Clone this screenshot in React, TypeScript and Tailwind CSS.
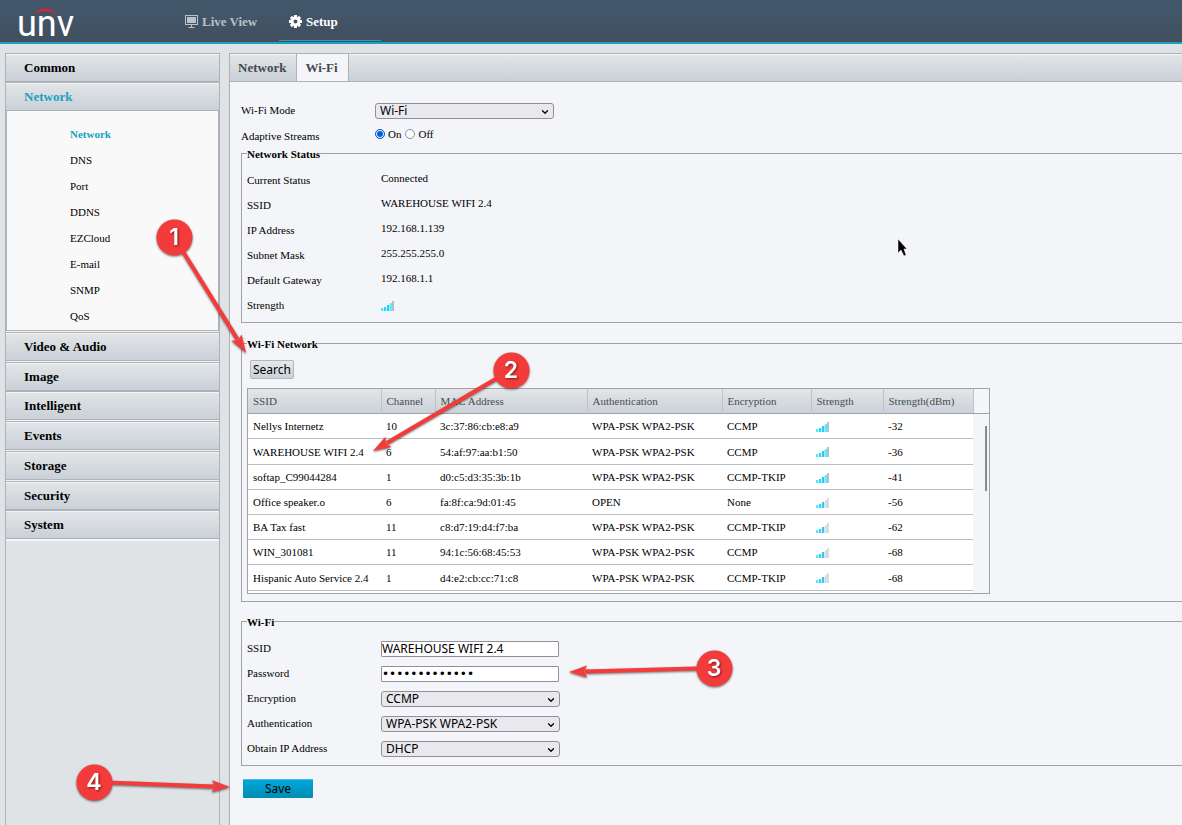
import { useState, type ReactNode } from "react";
import { ChevronDown } from "lucide-react";

const subMenu = ["Network", "DNS", "Port", "DDNS", "EZCloud", "E-mail", "SNMP", "QoS"];
const sections = ["Video & Audio", "Image", "Intelligent", "Events", "Storage", "Security", "System"];

const networks = [
  { ssid: "Nellys Internetz", channel: 10, mac: "3c:37:86:cb:e8:a9", auth: "WPA-PSK WPA2-PSK", enc: "CCMP", level: 4, dbm: -32 },
  { ssid: "WAREHOUSE WIFI 2.4", channel: 6, mac: "54:af:97:aa:b1:50", auth: "WPA-PSK WPA2-PSK", enc: "CCMP", level: 4, dbm: -36 },
  { ssid: "softap_C99044284", channel: 1, mac: "d0:c5:d3:35:3b:1b", auth: "WPA-PSK WPA2-PSK", enc: "CCMP-TKIP", level: 4, dbm: -41 },
  { ssid: "Office speaker.o", channel: 6, mac: "fa:8f:ca:9d:01:45", auth: "OPEN", enc: "None", level: 3, dbm: -56 },
  { ssid: "BA Tax fast", channel: 11, mac: "c8:d7:19:d4:f7:ba", auth: "WPA-PSK WPA2-PSK", enc: "CCMP-TKIP", level: 3, dbm: -62 },
  { ssid: "WIN_301081", channel: 11, mac: "94:1c:56:68:45:53", auth: "WPA-PSK WPA2-PSK", enc: "CCMP", level: 3, dbm: -68 },
  { ssid: "Hispanic Auto Service 2.4", channel: 1, mac: "d4:e2:cb:cc:71:c8", auth: "WPA-PSK WPA2-PSK", enc: "CCMP-TKIP", level: 3, dbm: -68 },
];

const columns = [
  { label: "SSID", width: "w-[133px]" },
  { label: "Channel", width: "w-[54px]" },
  { label: "MAC Address", width: "w-[152px]" },
  { label: "Authentication", width: "w-[135px]" },
  { label: "Encryption", width: "w-[89px]" },
  { label: "Strength", width: "w-[72px]" },
  { label: "Strength(dBm)", width: "w-[90px]" },
];

const steps = [
  { n: 1, x: 174, y: 237, tipX: 246, tipY: 353 },
  { n: 2, x: 511, y: 370, tipX: 373, tipY: 451 },
  { n: 3, x: 714, y: 668, tipX: 569, tipY: 672 },
  { n: 4, x: 94, y: 782, tipX: 230, tipY: 787 },
];

function Signal({ level }: { level: number }) {
  const bars = [
    { x: 0, h: 3, on: "#4fe9fa" },
    { x: 3, h: 4, on: "#33d3f7" },
    { x: 6, h: 6, on: "#35c4f5" },
    { x: 9, h: 8, on: "#4df2ff" },
    { x: 11, h: 10, on: "#4df2ff" },
  ];
  const off = level > 3 ? "#b9bcc0" : "#d9dcdf";
  return (
    <svg width="13" height="10" viewBox="0 0 13 10" shapeRendering="crispEdges" className="block">
      <path d="M2 7H5V6H8V4H9V10H2Z" fill="#c3f4fb" />
      {level > 3 && <path d="M8 3H11V10H8Z" fill="#9aeefb" />}
      {bars.map((b, i) => (
        <rect key={b.h} x={b.x} y={10 - b.h} width={2} height={b.h} fill={i < level ? b.on : off} />
      ))}
    </svg>
  );
}

function Select({ id, options }: { id: string; options: string[] }) {
  return (
    <div className="relative">
      <select
        id={id}
        className="block h-4 w-[179px] appearance-none rounded-[3px] border border-[#8f8f9d] bg-[#e9e9ed] pl-1 pr-4 font-['Noto_Sans',sans-serif] text-xs leading-[14px] text-black"
      >
        {options.map((o) => (
          <option key={o}>{o}</option>
        ))}
      </select>
      <ChevronDown className="pointer-events-none absolute top-1 right-1 size-2.5" strokeWidth={3} />
    </div>
  );
}

function Row({ label, htmlFor, children }: { label: string; htmlFor?: string; children: ReactNode }) {
  return (
    <div className="flex h-[25px] items-center">
      {htmlFor ? (
        <label htmlFor={htmlFor} className="w-[134px] shrink-0">{label}</label>
      ) : (
        <span className="w-[134px] shrink-0">{label}</span>
      )}
      {children}
    </div>
  );
}

function Group({ title, children }: { title: string; children: ReactNode }) {
  return (
    <fieldset className="min-w-0 border border-r-0 border-[#a0a2a6] pl-[5px]">
      <legend className="h-[13px] font-bold leading-[15px]">{title}</legend>
      {children}
    </fieldset>
  );
}

function MenuHeader({ label, active }: { label: string; active?: boolean }) {
  return (
    <button
      className={`block h-[29px] w-full border-y border-[#aeb2b7] bg-linear-to-b from-[#e3e6e8] to-[#c9d0d7] pl-[18px] text-left text-[13px] leading-[27px] font-bold shadow-[inset_0_1px_0_#f2f4f5] ${active ? "text-[#209fc5]" : "text-black"}`}
    >
      {label}
    </button>
  );
}

function Sidebar() {
  return (
    <aside className="w-[215px] shrink-0 border-x border-[#aeb2b7]">
      <MenuHeader label="Common" />
      <MenuHeader label="Network" active />
      <nav className="flex flex-col border-x border-b border-[#aeb2b7] bg-[#f9f9f9] pt-2.5 pb-px pl-[63px]">
        {subMenu.map((item, i) => (
          <a key={item} href="#" className={`leading-[26px] ${i === 0 ? "font-bold text-[#209fc5]" : ""}`}>
            {item}
          </a>
        ))}
      </nav>
      <div className="grid h-[210px] auto-rows-fr bg-[#f4f5f7] pt-px pb-px">
        {sections.map((s) => (
          <MenuHeader key={s} label={s} />
        ))}
      </div>
    </aside>
  );
}

function Header() {
  return (
    <header className="flex h-11 items-start border-b-2 border-[#209fc5] bg-linear-to-b from-[#43586d] to-[#414f5d]">
      <svg width="175" height="48" viewBox="0 0 175 48" role="img" aria-label="unv" className="shrink-0">
        <text x="17" y="36" fill="#fff" fontSize="36" fontFamily="Roboto, sans-serif">unv</text>
        <path d="M33 14Q45 3 57 14Q45 8 33 14Z" fill="#e0242b" />
      </svg>
      <nav className="flex gap-0.5 text-[13px] font-bold">
        <a href="#" className="flex h-[41px] w-[102px] items-center gap-1 pt-0.5 pl-2.5 text-[#b9c1c9]">
          <svg width="13" height="13" viewBox="0 0 13 13" fill="none" stroke="currentColor">
            <rect x="0.5" y="0.5" width="12" height="9" />
            <rect x="2" y="2" width="9" height="6" fill="currentColor" stroke="none" />
            <path d="M6.5 10v2M3.5 12.5h6" />
          </svg>
          Live View
        </a>
        <a href="#" className="flex h-[41px] w-[102px] items-center gap-1 border-b border-[#209fc5] pt-0.5 pl-2.5 text-white">
          <svg width="13" height="13" viewBox="0 0 13 13">
            {[0, 45, 90, 135].map((a) => (
              <rect key={a} x="5" y="0" width="3" height="13" fill="currentColor" transform={`rotate(${a} 6.5 6.5)`} />
            ))}
            <circle cx="6.5" cy="6.5" r="5" fill="currentColor" />
            <circle cx="6.5" cy="6.5" r="2" fill="#425365" />
          </svg>
          Setup
        </a>
      </nav>
    </header>
  );
}

function NetworkTable() {
  return (
    <div className="mt-[9px] flex h-[206px] w-[743px] border border-[#a0a2a6]">
      <div className="w-[725px] bg-white">
        <table className="w-full table-fixed border-collapse text-left">
          <thead>
            <tr className="h-[25px] bg-linear-to-b from-[#e3e6e8] to-[#c9d0d7] text-[#484c50] shadow-[inset_0_-1px_0_#a0a2a6]">
              {columns.map((c) => (
                <th key={c.label} className={`${c.width} border-r border-[#bfc3c7] p-0 pl-[5px] font-normal`}>{c.label}</th>
              ))}
            </tr>
          </thead>
          <tbody>
            {networks.map((n, i) => (
              <tr key={n.mac} className={`shadow-[inset_0_-1px_0_#bcbec1] ${i % 5 === 1 ? "h-[26px]" : "h-[25px]"}`}>
                <td className="p-0 pl-[5px] whitespace-nowrap">{n.ssid}</td>
                <td className="p-0 pl-[5px]">{n.channel}</td>
                <td className="p-0 pl-[5px]">{n.mac}</td>
                <td className="p-0 pl-[5px]">{n.auth}</td>
                <td className="p-0 pl-[5px]">{n.enc}</td>
                <td className="p-0 pl-[5px]"><Signal level={n.level} /></td>
                <td className="p-0 pl-[5px]">{n.dbm}</td>
              </tr>
            ))}
          </tbody>
        </table>
      </div>
      <div className="flex flex-1 flex-col">
        <div className="h-[25px] border-b border-[#a0a2a6]" />
        <div className="mt-3 mr-0.5 h-[65px] w-0.5 self-end bg-[#88898c]" />
      </div>
    </div>
  );
}

function Annotations() {
  return (
    <svg className="pointer-events-none absolute top-0 left-0" width="1182" height="825" viewBox="0 0 1182 825">
      {steps.map((s) => {
        const length = Math.hypot(s.tipX - s.x, s.tipY - s.y);
        const angle = (Math.atan2(s.tipY - s.y, s.tipX - s.x) * 180) / Math.PI;
        return (
          <g key={s.n} className="drop-shadow-[0_1px_1px_rgba(0,0,0,0.55)]">
            <g transform={`translate(${s.tipX} ${s.tipY}) rotate(${angle})`} fill="#f43b3b">
              <path d={`M${-length} -2H-16V2H${-length}Z`} />
              <path d="M0 0L-18 -6L-15 0L-18 6Z" />
            </g>
            <circle cx={s.x + 0.5} cy={s.y + 0.5} r="18" fill="#f43b3b" />
            <text x={s.x} y={s.y + 8} fill="#fff" fontSize="23" fontWeight="600" fontFamily="Inter, sans-serif" textAnchor="middle" className="drop-shadow-[1px_1px_1px_rgba(0,0,0,0.5)]">
              {s.n}
            </text>
          </g>
        );
      })}
      {/* mouse pointer */}
      <path d="M898 239V253L901 250L904 256L906 255L904 249H907Z" fill="#000" stroke="#fff" strokeWidth="0.5" />
    </svg>
  );
}

export default function App() {
  const [adaptive, setAdaptive] = useState("On");
  const [ssid, setSsid] = useState("WAREHOUSE WIFI 2.4");
  const [password, setPassword] = useState("warehouse2024");

  return (
    <div className="relative flex min-h-screen flex-col overflow-hidden bg-[#dfe3e6] font-['Liberation_Serif',serif] text-[11px] leading-[13px] text-black">
      <Header />
      <div className="flex flex-1 gap-[9px] pt-[9px] pl-[5px]">
        <Sidebar />
        <main className="min-w-0 flex-1 border-t border-l border-[#aeb2b7] bg-[#f4f5f8]">
          <div className="flex h-7 border-b border-[#aeb2b7] bg-linear-to-b from-[#e3e6e8] to-[#c9d0d7] text-[13px] leading-[27px] font-bold text-[#45494d] shadow-[inset_0_1px_0_#f2f4f5]">
            <button className="border-r border-[#aeb2b7] pr-2.5 pl-2">Network</button>
            <button className="border-r border-[#aeb2b7] bg-[#f4f5f8] pr-2.5 pl-2">Wi-Fi</button>
          </div>

          <form className="pt-4 pl-[11px]" onSubmit={(e) => e.preventDefault()}>
            <Row label="Wi-Fi Mode" htmlFor="mode">
              <Select id="mode" options={["Wi-Fi", "Wi-Fi Hotspot", "Off"]} />
            </Row>
            <div className="flex h-6" role="radiogroup" aria-labelledby="adaptive">
              <span id="adaptive" className="w-[134px] shrink-0 pt-[7px]">Adaptive Streams</span>
              <div className="flex items-center gap-1 pb-0.5">
                {["On", "Off"].map((v) => (
                  <label key={v} className="flex items-center gap-[3px]">
                    <input
                      type="radio"
                      name="adaptive"
                      checked={adaptive === v}
                      onChange={() => setAdaptive(v)}
                      className="size-2.5 appearance-none rounded-full border border-[#8f8f9d] bg-white checked:border-[#0060df] checked:bg-[#0060df] checked:shadow-[inset_0_0_0_1px_#fff]"
                    />
                    {v}
                  </label>
                ))}
              </div>
            </div>

            <Group title="Network Status">
              <div className="pt-2 pb-1">
                <Row label="Current Status"><span className="pb-1">Connected</span></Row>
                <Row label="SSID"><span className="pb-1">WAREHOUSE WIFI 2.4</span></Row>
                <Row label="IP Address"><span className="pb-1">192.168.1.139</span></Row>
                <Row label="Subnet Mask"><span className="pb-1">255.255.255.0</span></Row>
                <Row label="Default Gateway"><span className="pb-1">192.168.1.1</span></Row>
                <Row label="Strength"><Signal level={4} /></Row>
              </div>
            </Group>

            <div className="mt-3.5">
              <Group title="Wi-Fi Network">
                <div className="pt-2.5 pb-[7px]">
                  <button className="ml-[3px] block h-[19px] w-11 rounded-[2px] border border-[#b3b7bc] bg-linear-to-b from-[#e6e9eb] to-[#c9d0d7] font-['Noto_Sans',sans-serif] text-xs leading-[17px]">
                    Search
                  </button>
                  <NetworkTable />
                </div>
              </Group>
            </div>

            <div className="mt-[13px]">
              <Group title="Wi-Fi">
                <div className="pt-2 pb-1">
                  <Row label="SSID" htmlFor="ssid">
                    <input
                      id="ssid"
                      value={ssid}
                      onChange={(e) => setSsid(e.target.value)}
                      className="h-4 w-[178px] rounded-[1px] border border-[#8f8f9d] bg-white font-['Noto_Sans',sans-serif] text-xs leading-[14px]"
                    />
                  </Row>
                  <Row label="Password" htmlFor="password">
                    <input
                      id="password"
                      type="password"
                      value={password}
                      onChange={(e) => setPassword(e.target.value)}
                      className="h-4 w-[178px] rounded-[1px] border border-[#8f8f9d] bg-white font-['DejaVu_Sans',sans-serif] text-xs leading-[14px]"
                    />
                  </Row>
                  <Row label="Encryption" htmlFor="encryption">
                    <Select id="encryption" options={["CCMP", "TKIP", "CCMP-TKIP"]} />
                  </Row>
                  <Row label="Authentication" htmlFor="auth">
                    <Select id="auth" options={["WPA-PSK WPA2-PSK", "OPEN"]} />
                  </Row>
                  <Row label="Obtain IP Address" htmlFor="ip">
                    <Select id="ip" options={["DHCP", "Static"]} />
                  </Row>
                </div>
              </Group>
            </div>

            <button className="mt-[13px] ml-0.5 block h-[19px] w-[70px] rounded-[1px] bg-linear-to-b from-[#00a9dc] to-[#008cb4] font-['Noto_Sans',sans-serif] text-xs leading-[19px] shadow-[inset_0_1px_0_#3fc0e6]">
              Save
            </button>
          </form>
        </main>
      </div>
      <Annotations />
    </div>
  );
}
